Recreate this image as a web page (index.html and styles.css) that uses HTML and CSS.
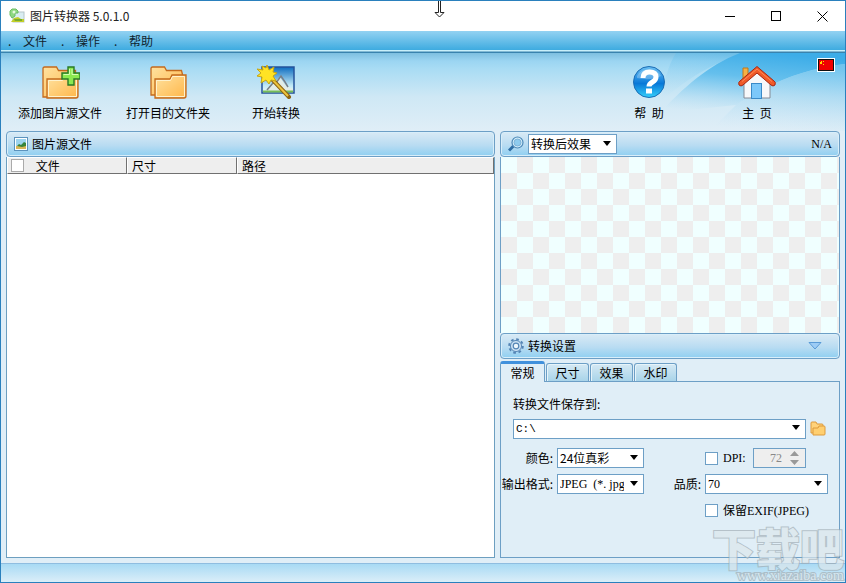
FILE: index.html
```
<!doctype html>
<html lang="zh-CN">
    <head>
        <meta charset="utf-8" />
        <title>图片转换器 5.0.1.0</title>
        <link rel="stylesheet" href="styles.css">
    </head>
    <body>
        <svg width="0" height="0" class="defs">
            <defs>
                <linearGradient id="folder" x1="0" y1="0" x2="1" y2="1">
                    <stop offset="0" stop-color="#ffe2a0" />
                    <stop offset="1" stop-color="#ffb648" />
                </linearGradient>
                <linearGradient id="sky" x1="0" y1="0" x2="0" y2="1">
                    <stop offset="0" stop-color="#0d6cc0" />
                    <stop offset="0.7" stop-color="#bfe8f6" />
                    <stop offset="1" stop-color="#eefaf4" />
                </linearGradient>
                <linearGradient id="ball" x1="0" y1="0" x2="0" y2="1">
                    <stop offset="0" stop-color="#6cc0f2" />
                    <stop offset="0.45" stop-color="#1a86de" />
                    <stop offset="0.55" stop-color="#0878d8" />
                    <stop offset="1" stop-color="#35d0fa" />
                </linearGradient>
                <linearGradient id="wave" x1="0.6" y1="0" x2="0.3" y2="1">
                    <stop offset="0" stop-color="#3dade8" />
                    <stop offset="0.4" stop-color="#5dbcec" stop-opacity="0.9" />
                    <stop offset="1" stop-color="#a5d8f3" stop-opacity="0" />
                </linearGradient>
                <linearGradient id="wave-soft" x1="0.6" y1="0" x2="0.4" y2="1">
                    <stop offset="0" stop-color="#5dbcec" />
                    <stop offset="1" stop-color="#b5def4" stop-opacity="0" />
                </linearGradient>
            </defs>
        </svg>

        <header class="titlebar">
            <svg class="app-icon" width="16" height="16" viewBox="0 0 16 16">
                <rect x="4" y="4" width="11" height="10" fill="#d9edf2" stroke="#b5c6ca" />
                <path d="M2 14l3-4 4-1 3 2 3 0v3z" fill="#c3cf28" />
                <path d="M5 11h8v2H6z" fill="#77ac2e" />
                <path d="M1 7V3l2-2h4l2 2v2H6v3l-3 2z" fill="#8fd982" stroke="#6cbd64" />
                <circle cx="5" cy="4" r="1.5" fill="#e6f9df" />
            </svg>
            <h1>图片转换器 5.0.1.0</h1>
            <button class="win-btn" aria-label="最小化">
                <svg width="11" height="11"><path d="M0 5.5h10" stroke="#000" /></svg>
            </button>
            <button class="win-btn" aria-label="最大化">
                <svg width="11" height="11"><rect x="0.5" y="0.5" width="9" height="9" fill="none" stroke="#000" /></svg>
            </button>
            <button class="win-btn" aria-label="关闭">
                <svg width="11" height="11"><path d="M0.5 0.5l10 10M10.5 0.5l-10 10" stroke="#000" /></svg>
            </button>
        </header>
        <svg class="cursor" width="11" height="17" viewBox="0 0 11 17">
            <path d="M4.500-1v12.500h-3.500l4.500 4.500 4.500-4.500h-3.500v-12.500" fill="#fff" stroke="#222" />
        </svg>

        <nav class="menu">
            <a href="#"><span>.</span>文件</a>
            <a href="#"><span>.</span>操作</a>
            <a href="#"><span>.</span>帮助</a>
        </nav>

        <div class="toolbar">
            <svg class="swoosh" width="185" height="78" viewBox="0 0 185 78">
                <path d="M16 0H84C58 8 24 26 0 50C4 30 8 12 16 0z" fill="url(#wave-soft)" opacity="0.5" />
                <path d="M80 0H185V11C145 16 112 28 76 52L0 60C22 36 48 12 80 0z" fill="url(#wave)" />
                <path d="M185 11C145 16 112 28 76 52L50 78H185z" fill="url(#wave-soft)" opacity="0.7" />
            </svg>
            <button class="tool">
                <svg width="40" height="34" viewBox="0 0 40 34">
                    <path d="M3 32V3.500q0-1.500 1.500-1.500h12l2 3.500h17V32z" fill="url(#folder)" stroke="#c46a1c" stroke-width="1.300" />
                    <path d="M7 33V14h15l2-3h14V31q0 2-2 2z" fill="url(#folder)" stroke="#c46a1c" stroke-width="1.300" />
                    <path d="M8.500 31.500V15.500h14l2-3h12V31.500z" fill="none" stroke="#fff2cc" />
                    <path d="M28 2h6v6h6v6h-6v6h-6v-6h-6V8h6z" fill="#8cea50" stroke="#287a26" stroke-width="1.400" />
                    <path d="M29.500 4v5.500h-6M32 4v5.500h6" fill="none" stroke="#d4ffb0" />
                </svg>
                添加图片源文件
            </button>
            <button class="tool">
                <svg width="40" height="34" viewBox="0 0 40 34">
                    <path d="M3 30V3.500q0-1.500 1.500-1.500h12l2 3.500h15l1 4V30z" fill="url(#folder)" stroke="#c46a1c" stroke-width="1.300" />
                    <path d="M7 33V14h15l2-4h14V31q0 2-2 2z" fill="url(#folder)" stroke="#c46a1c" stroke-width="1.300" />
                    <path d="M8.500 31.500V15.500h14l2-4h12V31.500z" fill="none" stroke="#fff2cc" />
                </svg>
                打开目的文件夹
            </button>
            <button class="tool">
                <svg width="40" height="34" viewBox="0 0 40 34">
                    <rect x="6" y="2" width="32" height="26" fill="url(#sky)" stroke="#24539b" stroke-width="1.500" />
                    <path d="M8 27l9-8 7-7 6 9 7 3v3z" fill="#e3ece6" />
                    <path d="M11 25l6-7h3l5-7 4 6 3 5" fill="none" stroke="#777f87" stroke-width="1.500" />
                    <path d="M7 25.500h30v2H7z" fill="#74bd58" />
                    <path d="M13 11L33 32" stroke="#8d6310" stroke-width="4" stroke-linecap="round" />
                    <path d="M13 11L32 31" stroke="#ecc33e" stroke-width="2" />
                    <path d="M11 0l2 5 5-3-1 5 4 1-4 3 3 5-5-1-2 4-3-4-5 3 1-6-5-1 4-3-4-4 6 1-1-4 4 2z" fill="#ffe324" stroke="#c6a613" />
                </svg>
                开始转换
            </button>
            <button class="tool tool-help">
                <svg width="40" height="34" viewBox="0 0 40 34">
                    <circle cx="20" cy="17" r="15.500" fill="url(#ball)" stroke="#1b6db5" />
                    <path d="M8 11a13 11 0 0 1 24 0q-10 5-24 2z" fill="#fff" opacity="0.25" />
                    <path d="M14 13q0-6 6.500-6t6.500 5q0 3-3.500 5t-3.500 4.500" fill="none" stroke="#fff" stroke-width="5" />
                    <rect x="17" y="23.500" width="6" height="5" fill="#fff" />
                </svg>
                帮&nbsp; 助
            </button>
            <button class="tool">
                <svg width="40" height="34" viewBox="0 0 40 34">
                    <path d="M6 16V3h5v9" fill="#f6b043" stroke="#bf781a" />
                    <path d="M7 18L20 7l13 11v15H7z" fill="#f7f8fa" stroke="#858b96" />
                    <rect x="14.500" y="18.500" width="10" height="15" fill="#7cc8fa" stroke="#3a8ac8" />
                    <path d="M2 20q-1-3 1-4L20 1.500 37 16q2 1 1 4-2 2-4 0L20 8 6 20q-2 2-4 0z" fill="#f05a28" stroke="#a82612" />
                    <path d="M5 16.500L20 4l15 12.500" fill="none" stroke="#ff8a58" />
                </svg>
                主&nbsp; 页
            </button>
            <button class="flag" aria-label="中文">
                <svg width="18" height="14" viewBox="0 0 18 14">
                    <rect x="0.500" y="0.500" width="17" height="13" fill="#fff" stroke="#fff" />
                    <rect x="1.500" y="1.500" width="15" height="11" fill="#f00000" stroke="#101010" />
                    <path d="M3 4h2v2H3zM6 3h1v1H6zM6 6h1v1H6zM4 3h1v1H4z" fill="#ffe000" />
                </svg>
            </button>
        </div>

        <main>
            <section class="source">
                <h2 class="bar">
                    <svg width="14" height="14" viewBox="0 0 14 14">
                        <rect x="0.500" y="0.500" width="13" height="13" fill="#fff" stroke="#5c93bd" />
                        <rect x="2" y="2" width="10" height="10" fill="#9cd4ee" />
                        <path d="M2 10l3-3 2 1 3-3 2 1v3H2z" fill="#37843a" />
                        <path d="M2 9h10v3H2z" fill="#d9b657" />
                        <path d="M3 9h9l-4 1z" fill="#37843a" />
                    </svg>
                    图片源文件
                </h2>
                <div class="list">
                    <table>
                        <thead>
                            <tr>
                                <th class="col-file">
                                    <input type="checkbox" id="all" aria-label="全选" />
                                    <label for="all">文件</label>
                                </th>
                                <th class="col-size">尺寸</th>
                                <th>路径</th>
                            </tr>
                        </thead>
                    </table>
                </div>
            </section>

            <section class="side">
                <div class="bar">
                    <svg width="16" height="16" viewBox="0 0 16 16">
                        <path d="M1 14.500l5-5" stroke="#2f6ea5" stroke-width="3" />
                        <circle cx="9.500" cy="6.500" r="5.500" fill="#d5eefb" stroke="#4d89b8" stroke-width="1.200" />
                        <circle cx="9.500" cy="6.500" r="3.500" fill="#8ecbee" stroke="#7fb2d6" />
                    </svg>
                    <span class="combo combo-view">
                        <select aria-label="预览"><option>转换后效果</option></select>
                    </span>
                    <span class="latin info">N/A</span>
                </div>
                <div class="preview"></div>
                <h2 class="bar">
                    <svg width="16" height="16" viewBox="0 0 16 16">
                        <circle cx="8" cy="8" r="6.800" fill="none" stroke="#5585b5" stroke-width="2" stroke-dasharray="2.670 2.670" />
                        <circle cx="8" cy="8" r="5.500" fill="#cfe4f5" stroke="#5585b5" />
                        <circle cx="8" cy="8" r="2.800" fill="#edf6fc" stroke="#5585b5" stroke-width="1.200" />
                    </svg>
                    转换设置
                    <button class="collapse" aria-label="收起">
                        <svg width="14" height="8" viewBox="0 0 14 8"><path d="M1 0.500h12L7 7z" fill="#9dccf5" stroke="#5a9ad6" /></svg>
                    </button>
                </h2>
                <div class="tabs">
                    <button class="tab active">常规</button>
                    <button class="tab">尺寸</button>
                    <button class="tab">效果</button>
                    <button class="tab">水印</button>
                </div>
                <form class="settings">
                    <label class="save-label" for="path">转换文件保存到:</label>
                    <div class="path-row">
                        <span class="combo">
                            <select id="path" class="mono"><option>C:\</option></select>
                        </span>
                        <button type="button" aria-label="浏览">
                            <svg width="16" height="15" viewBox="0 0 16 15">
                                <path d="M1 12V2q0-1 1-1h4l1 2h5q1 0 1 1v8z" fill="#ffd27a" stroke="#dd9a3c" />
                                <path d="M3 14V7h5l1-2h5q1 0 1 1v7q0 1-1 1z" fill="#ffcf70" stroke="#dd9a3c" />
                            </svg>
                        </button>
                    </div>
                    <div class="fields">
                        <label class="name" for="color">颜色:</label>
                        <span class="combo"><select id="color"><option>24位真彩</option></select></span>
                        <span></span>
                        <span class="dpi">
                            <input type="checkbox" id="dpi" />
                            <label class="latin" for="dpi">DPI:</label>
                            <span class="spin">
                                <input type="text" class="latin" value="72" aria-label="DPI" disabled />
                                <svg width="9" height="14" viewBox="0 0 9 14"><path d="M0 5l4.500-5L9 5zM0 9h9l-4.500 5z" fill="#999" /></svg>
                            </span>
                        </span>

                        <label class="name" for="format">输出格式:</label>
                        <span class="combo"><select id="format" class="latin"><option>JPEG&nbsp; (*. jpg)</option></select></span>
                        <label class="name" for="quality">品质:</label>
                        <span class="combo"><select id="quality" class="latin"><option>70</option></select></span>

                        <span class="dpi exif">
                            <input type="checkbox" id="exif" />
                            <label for="exif">保留<span class="latin">EXIF(JPEG)</span></label>
                        </span>
                    </div>
                </form>
            </section>
        </main>

        <footer></footer>
        <div class="watermark">
            <b>下载吧</b>
            <span>www.xiazaiba.com</span>
        </div>
    </body>
</html>
```
FILE: styles.css
```
* {
    box-sizing: border-box;
}

body {
    margin: 0;
    min-height: 100vh;
    display: flex;
    flex-direction: column;
    position: relative;
    overflow: hidden;

    font-family: "Noto Sans CJK SC", sans-serif;
    font-size: 12px;
    line-height: 18px;
    color: #000;
    background-color: #e0eef7;
    border: 1px solid #2a80bd;
}

button,
select,
input {
    font: inherit;
    color: inherit;
    margin: 0;
    padding: 0;
}

button {
    border: 0;
    background: none;
}

svg {
    display: block;
    flex: none;
}

h1,
h2 {
    margin: 0;
    font-size: 12px;
    font-weight: normal;
}

.defs {
    position: absolute;
}

.latin {
    font-family: "Liberation Serif", serif;
}

.mono {
    font-family: "Liberation Mono", monospace;
}

.titlebar {
    height: 30px;
    display: flex;
    align-items: center;
    background-color: #fff;
}

.titlebar h1 {
    flex: 1;
    color: #222;
}

.app-icon {
    margin: 0 5px 0 8px;
}

.win-btn {
    width: 46px;
    height: 30px;
    display: flex;
    align-items: center;
    justify-content: center;
}

.cursor {
    position: absolute;
    left: 433px;
    top: 0;
}

.menu {
    height: 22px;
    display: flex;
    padding: 0 7px 2px;
    background: linear-gradient(#93d2f2, #3eabe0 19px, #c9f0fb 19px, #c9f0fb 20px, #3983ae 21px);
}

.menu a {
    width: 53px;
    line-height: 20px;
    color: #10242f;
    text-decoration: none;
}

.menu a span {
    display: inline-block;
    width: 15px;
}

.toolbar {
    height: 78px;
    display: flex;
    position: relative;
    padding: 0 34px 0 5px;
    background: linear-gradient(#7dbfe0, #9bd5f2 8px, #a9dcf4 16px, #cfe8f5 44px, #e0eef7);
}

.swoosh {
    position: absolute;
    top: 0;
    right: 0;
}

.tool {
    width: 108px;
    padding-top: 12px;
    position: relative;
    display: flex;
    flex-direction: column;
    align-items: center;
    gap: 5px;
}

.tool-help {
    margin-left: auto;
}

.flag {
    position: absolute;
    right: 10px;
    top: 5px;
}

main {
    flex: 1;
    display: grid;
    grid-template-columns: 1fr 340px;
    gap: 5px;
    padding: 0 5px 5px;
}

.source,
.side {
    display: flex;
    flex-direction: column;
}

.bar {
    height: 26px;
    display: flex;
    align-items: center;
    gap: 4px;
    padding: 0 7px;
    border: 1px solid #6d9fc6;
    border-radius: 4px;
    background: linear-gradient(#d9eaf5, #b9dcf2 55%, #8fcff1);
    box-shadow: inset 0 0 0 1px #d8eefa;
}

.list {
    flex: 1;
    border: 1px solid #6d9fc0;
    border-top: 0;
    background-color: #fff;
}

table {
    width: 100%;
    border-spacing: 0;
    table-layout: fixed;
}

th {
    height: 17px;
    padding: 0 4px;
    line-height: 14px;
    font-weight: normal;
    text-align: left;
    background-color: #eee;
    border: 1px solid #707070;
    border-top-color: #fff;
    border-left-color: #fff;
}

.col-file {
    width: 120px;
    padding: 0 3px;
}

.col-size {
    width: 110px;
}

th input {
    vertical-align: top;
    margin-right: 9px;
}

input[type="checkbox"] {
    appearance: none;
    width: 13px;
    height: 13px;
    flex: none;
    border: 1px solid #6d9fc6;
    background-color: #fff;
}

th input[type="checkbox"] {
    border-color: #aaa;
}

.combo {
    display: block;
    position: relative;
    height: 20px;
}

.combo::after {
    content: "";
    position: absolute;
    right: 6px;
    top: 7px;
    border: 4px solid transparent;
    border-top: 5px solid #000;
    border-bottom: 0;
    pointer-events: none;
}

.combo select {
    appearance: none;
    width: 100%;
    height: 20px;
    padding: 0 19px 0 2px;
    border: 1px solid #6d9fc6;
    border-radius: 0;
    background-color: #fff;
}

.combo .latin,
.spin .latin {
    font-family: "Liberation Serif", serif;
}

.combo .mono {
    font-family: "Liberation Mono", monospace;
    font-size: 11px;
}

.combo-view {
    width: 89px;
}

.info {
    margin-left: auto;
}

.preview {
    flex: 1;
    border: 1px solid #6d9fc6;
    border-width: 0 1px;
    background: repeating-conic-gradient(#eee 0 25%, #f0ffff 0 50%) 0 0 / 32px 32px;
}

.collapse {
    margin: 0 10px 0 auto;
}

.tabs {
    height: 22px;
    display: flex;
    align-items: flex-end;
    gap: 1px;
}

.tab {
    width: 43px;
    height: 18px;
    border: 1px solid #6d9fc6;
    border-bottom: 0;
    border-radius: 3px 3px 0 0;
    line-height: 17px;
    background: linear-gradient(#d5e9f4, #a9d4e9);
    box-shadow: inset 1px 1px 0 #e6f4fa;
}

.tab.active {
    width: 45px;
    height: 21px;
    margin-bottom: -1px;
    position: relative;
    border-top: 3px solid #4090dc;
    line-height: 14px;
    background: #e0eef7;
    box-shadow: none;
}

.settings {
    border: 1px solid #6d9fc6;
    padding: 13px 0 34px;
}

.save-label {
    display: block;
    margin-left: 12px;
}

.path-row {
    display: flex;
    align-items: center;
    gap: 4px;
    margin: 5px 13px 7px 12px;
}

.path-row .combo {
    flex: 1;
}

.fields {
    display: grid;
    grid-template-columns: 56px 87px 1fr 123px;
    grid-auto-rows: 26px;
    align-items: center;
    padding-right: 11px;
}

.name {
    padding-right: 4px;
    text-align: right;
    white-space: nowrap;
}

.dpi {
    display: flex;
    align-items: center;
    gap: 5px;
}

.exif {
    grid-column: 4;
}

.spin {
    width: 53px;
    height: 20px;
    margin-left: auto;
    margin-right: 22px;
    display: flex;
    align-items: center;
    gap: 8px;
    padding-right: 6px;
    border: 1px solid #6d9fc6;
    background-color: #eee;
}

.spin input {
    flex: 1;
    min-width: 0;
    border: 0;
    text-align: right;
    color: #888;
    background: none;
}

footer {
    height: 19px;
    border-top: 1px solid #8fbde0;
    background: linear-gradient(#a8daf4, #dbeef8);
}

.watermark {
    position: absolute;
    right: 1px;
    bottom: 0;
    display: flex;
    flex-direction: column;
    align-items: flex-end;
    line-height: 12px;
    color: #dde7ec;
    -webkit-text-stroke: 2px #a3afb6;
    paint-order: stroke;
    opacity: 0.7;
    pointer-events: none;
}

.watermark b {
    font-size: 44px;
    line-height: 46px;
    font-weight: 900;
}

.watermark span {
    font-family: "Liberation Serif", serif;
    font-size: 14px;
}
```
